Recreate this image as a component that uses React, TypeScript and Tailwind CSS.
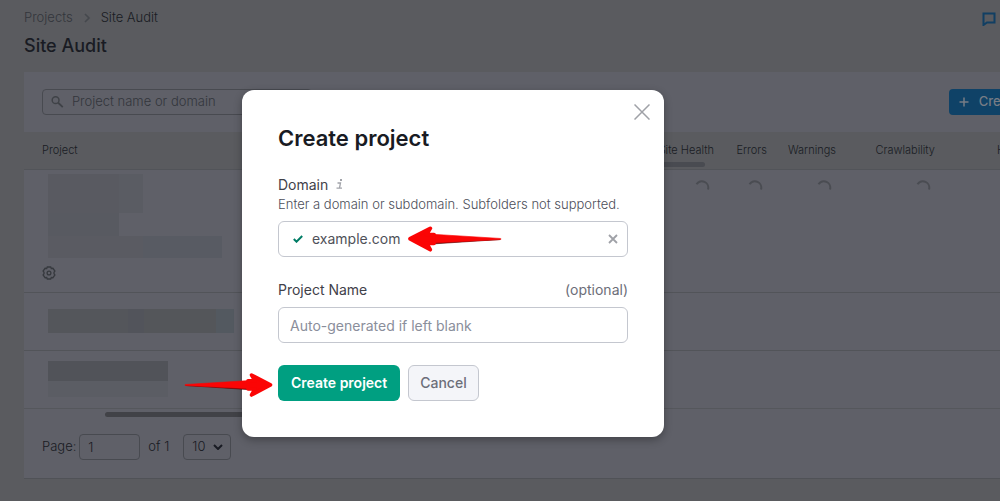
import React from "react";

const metrics = ["Site Health", "Errors", "Warnings", "Crawlability"];

function Spinner() {
  return (
    <svg viewBox="0 0 16 16" className="ml-auto h-4 w-4" fill="none" stroke="#4a4c52" strokeWidth="2" aria-hidden="true">
      <path d="M2.500 4.200A6.400 6.400 0 0 1 14 9.500" />
    </svg>
  );
}

function Arrow({ flip = false, className = "" }: { flip?: boolean; className?: string }) {
  return (
    <svg viewBox="0 0 96 28" className={className} aria-hidden="true">
      <g transform={flip ? "translate(96 0) scale(-1 1)" : undefined} strokeLinejoin="round" strokeLinecap="round">
        <path d="M2 14.500 66 18.700 69 18.500 67 17Z" fill="#5c0000" stroke="#5c0000" strokeWidth="0.600" />
        <path d="M1.500 13.500 66 9.500V17.800L1.500 14.500Z" fill="#fb0505" stroke="#fb0505" strokeWidth="0.600" />
        <path d="M67.500 4 86.500 13.800 67.500 24 71 18H64V9.800H71Z" fill="#fb0505" stroke="#fb0505" strokeWidth="3.600" />
      </g>
    </svg>
  );
}

function Background() {
  return (
    <div className="min-h-screen overflow-hidden bg-[#5a5b5f] pl-6 text-[#24262d]">
      <header className="flex h-18 items-start justify-between pt-2">
        <div>
          <nav className="flex h-5 items-center gap-2.5 text-[13px] font-light">
            <a href="#projects" className="text-[#33363c]">Projects</a>
            <svg viewBox="0 0 8 10" className="h-2.5 w-2" fill="none" stroke="#45484d" strokeWidth="1.6" aria-hidden="true"><path d="m2 1 4 4-4 4" /></svg>
            <span className="text-[#191b23]">Site Audit</span>
          </nav>
          <h1 className="mt-1 text-[18px] leading-7 font-medium text-[#191b23]">Site Audit</h1>
        </div>
        <button aria-label="Feedback" className="mt-1 mr-1">
          <svg viewBox="0 0 14 14" className="h-3.5 w-3.5" fill="none" stroke="#113f63" strokeWidth="2" aria-hidden="true"><path d="M1.500 1.500h11v9H5l-3.500 2.500z" /></svg>
        </button>
      </header>

      <main className="border-b border-[#505257] bg-[#5f6068]">
        <div className="flex h-15 items-center justify-between pl-4.5">
          <label className="flex h-[26px] w-[270px] items-center gap-2 rounded border border-[#484a50] pl-2">
            <svg viewBox="0 0 14 14" className="h-3.5 w-3.5" fill="none" stroke="#3f4247" strokeWidth="1.6" aria-hidden="true"><circle cx="5" cy="5" r="3.700" /><path d="m7.800 7.800 5 4.700" strokeWidth="2" /></svg>
            <input aria-label="Project name or domain" placeholder="Project name or domain" className="w-full bg-transparent text-[13px] font-light outline-none placeholder:text-[#33363c]" />
          </label>
          <button className="-mr-[77px] flex h-[26px] items-center gap-2.5 rounded bg-[#0f4267] px-2.5 text-[13px] font-medium whitespace-nowrap text-[#777c85]">
            <svg viewBox="0 0 10 10" className="h-2.5 w-2.5" stroke="#777c85" strokeWidth="1.500" aria-hidden="true"><path d="M5 0.500v9M0.500 5h9" /></svg>
            Create project
          </button>
        </div>

        <div className="relative overflow-hidden">
          <table className="w-[1100px] table-fixed border-collapse text-left text-[11px]">
            <colgroup>
              <col className="w-[618px]" />
              <col className="w-[82px]" />
              <col className="w-[53px]" />
              <col className="w-[69px]" />
              <col className="w-[99px]" />
              <col />
            </colgroup>
            <thead>
              <tr className="h-[37px] border-b border-[#525459] bg-[#5a5b5f] text-[#191b23]">
                <th className="pl-4.5 font-light">Project</th>
                {metrics.map((m) => (
                  <th key={m} className="pr-2.5 text-right font-light whitespace-nowrap">{m}</th>
                ))}
                <th className="pl-[52px] font-light">HTTPS</th>
              </tr>
            </thead>
            <tbody>
              <tr className="h-[123px] border-b border-[#525459] align-top">
                <td className="pt-1 pl-4.5">
                  <div className="ml-1.5 h-[84px] w-[174px]">
                    <div className="flex h-[39px]">
                      <div className="w-[71px] bg-[#595a61]" />
                      <div className="w-6 bg-[#5a5c63]" />
                    </div>
                    <div className="h-[23px] w-[71px] bg-[#585a61]" />
                    <div className="flex h-[22px]">
                      <div className="w-[95px] bg-[#5a5b62]" />
                      <div className="w-[79px] bg-[#585b63]" />
                    </div>
                  </div>
                  <button aria-label="Project settings" className="mt-2 block">
                    <svg viewBox="0 0 14 14" className="h-3.5 w-3.5" fill="none" stroke="#36393e" strokeWidth="1.300" aria-hidden="true"><path d="M5.300 1h3.400l.6 1.500 1.600-.2L12.900 5l-.9 1.300v1.400l.9 1.300-2 2.700-1.600-.2-.6 1.500H5.300l-.6-1.500-1.600.2L1.100 9 2 7.700V6.300L1.100 5l2-2.700 1.600.2z" /><circle cx="7" cy="7" r="1.900" /></svg>
                  </button>
                </td>
                {metrics.map((m) => (
                  <td key={m} className="pt-2.5 pr-3.5"><Spinner /></td>
                ))}
                <td />
              </tr>
              <tr className="h-[58px] border-b border-[#525459]">
                <td className="pl-6">
                  <div className="flex h-6">
                    <div className="w-20 bg-[#54565b]" />
                    <div className="w-4 bg-[#52545b]" />
                    <div className="w-[72px] bg-[#54565a]" />
                    <div className="w-[18px] bg-[#535960]" />
                  </div>
                </td>
                <td colSpan={5} />
              </tr>
              <tr className="h-[58px] border-b border-[#55575c]">
                <td className="pl-6">
                  <div className="h-5 w-[120px] bg-[#515359]" />
                  <div className="h-4 w-[120px] bg-[#5b5d64]" />
                </td>
                <td colSpan={5} />
              </tr>
            </tbody>
          </table>
          <div className="absolute top-[30px] left-[400px] h-[5px] w-[281px] rounded bg-[#494b51]" />
        </div>
        <div className="mt-[3px] ml-[81px] h-[5px] w-[500px] rounded bg-[#414247]" />

        <div className="flex h-[61px] items-center pl-4.5 text-[13px] font-light text-[#191b23]">
          <label className="flex items-center gap-[3px]">
            Page:
            <input defaultValue="1" className="h-[26px] w-[61px] rounded border border-[#484a50] bg-transparent px-2 outline-none" />
          </label>
          <span className="ml-2">of 1</span>
          <div className="relative ml-3.5">
            <select aria-label="Rows per page" defaultValue="10" className="h-[26px] w-12 appearance-none rounded border border-[#484a50] bg-transparent pl-2 outline-none">
              <option>10</option>
              <option>20</option>
            </select>
            <svg viewBox="0 0 10 6" className="pointer-events-none absolute top-2.5 right-2 h-1.5 w-2.5" fill="none" stroke="#191b23" strokeWidth="2" aria-hidden="true"><path d="m1 1 4 4 4-4" /></svg>
          </div>
        </div>
      </main>
    </div>
  );
}

function CreateProjectDialog() {
  return (
    <div role="dialog" aria-modal="true" aria-labelledby="dialog-title" className="relative h-fit w-[422px] rounded-xl bg-white px-9 pt-8 pb-9 text-[14px] text-[#3f4149] shadow-[0_3px_8px_rgba(0,0,0,0.3)]">
      <button aria-label="Close" className="absolute top-3.5 right-3.5">
        <svg viewBox="0 0 16 16" className="h-4 w-4" stroke="#9fa1a7" strokeWidth="1.500" aria-hidden="true"><path d="m0.500 0.500 15 15M15.500 0.500l-15 15" /></svg>
      </button>
      <h2 id="dialog-title" className="text-[22px] leading-8 font-semibold text-[#191b23]">Create project</h2>
      <div className="mt-5 flex h-5 items-center gap-2">
        <label htmlFor="domain">Domain</label>
        <svg viewBox="0 0 8 10" className="h-2.5 w-2" fill="none" stroke="#a2a4aa" strokeWidth="1.300" aria-hidden="true"><path d="M1.500 4h3l-1 5M0.500 9.200h5.500" /><path d="M4 1h2" strokeWidth="2" /></svg>
      </div>
      <p className="text-[13px] leading-5 font-light text-[#4c4e59]">Enter a domain or subdomain. Subfolders not supported.</p>
      <div className="mt-[7px] flex h-9 items-center rounded-md border border-[#c4c7cf] pr-[9px] pl-3.5">
        <svg viewBox="0 0 10 8" className="h-2 w-2.5 shrink-0" fill="none" stroke="#007c65" strokeWidth="2" aria-hidden="true"><path d="m0.800 4 2.700 2.700L9.200 1" /></svg>
        <input id="domain" defaultValue="example.com" className="ml-[9px] min-w-0 flex-1 bg-transparent pb-0.5 text-[#4f5159] outline-none" />
        <button aria-label="Clear domain">
          <svg viewBox="0 0 10 10" className="h-2.5 w-2.5" stroke="#9fa1a7" strokeWidth="1.800" aria-hidden="true"><path d="m1 1 8 8M9 1 1 9" /></svg>
        </button>
      </div>
      <div className="mt-[23px] flex h-5 justify-between leading-5">
        <label htmlFor="project-name">Project Name</label>
        <span className="text-[#6c6e79]">(optional)</span>
      </div>
      <input id="project-name" placeholder="Auto-generated if left blank" className="mt-[7px] block h-9 w-full rounded-md border border-[#c4c7cf] px-[11px] outline-none placeholder:text-[#8a8e9b]" />
      <div className="mt-[22px] flex gap-2">
        <button className="h-9 rounded-md bg-[#009f81] px-[13px] pb-0.5 font-semibold text-white">Create project</button>
        <button className="h-9 rounded-md border border-[#c4c7cf] bg-[#f4f5f9] px-[11px] pb-0.5 font-medium text-[#6c6e79]">Cancel</button>
      </div>
      <Arrow flip className="absolute top-[134px] left-[158px] h-[30px] w-[102px]" />
      <Arrow className="absolute top-[281px] -left-[58px] h-7 w-24" />
    </div>
  );
}

export default function App() {
  return (
    <div className="relative h-screen overflow-hidden font-['Inter',sans-serif]">
      <Background />
      <div className="absolute inset-0 flex justify-center pt-[90px] pr-[94px]">
        <CreateProjectDialog />
      </div>
    </div>
  );
}
